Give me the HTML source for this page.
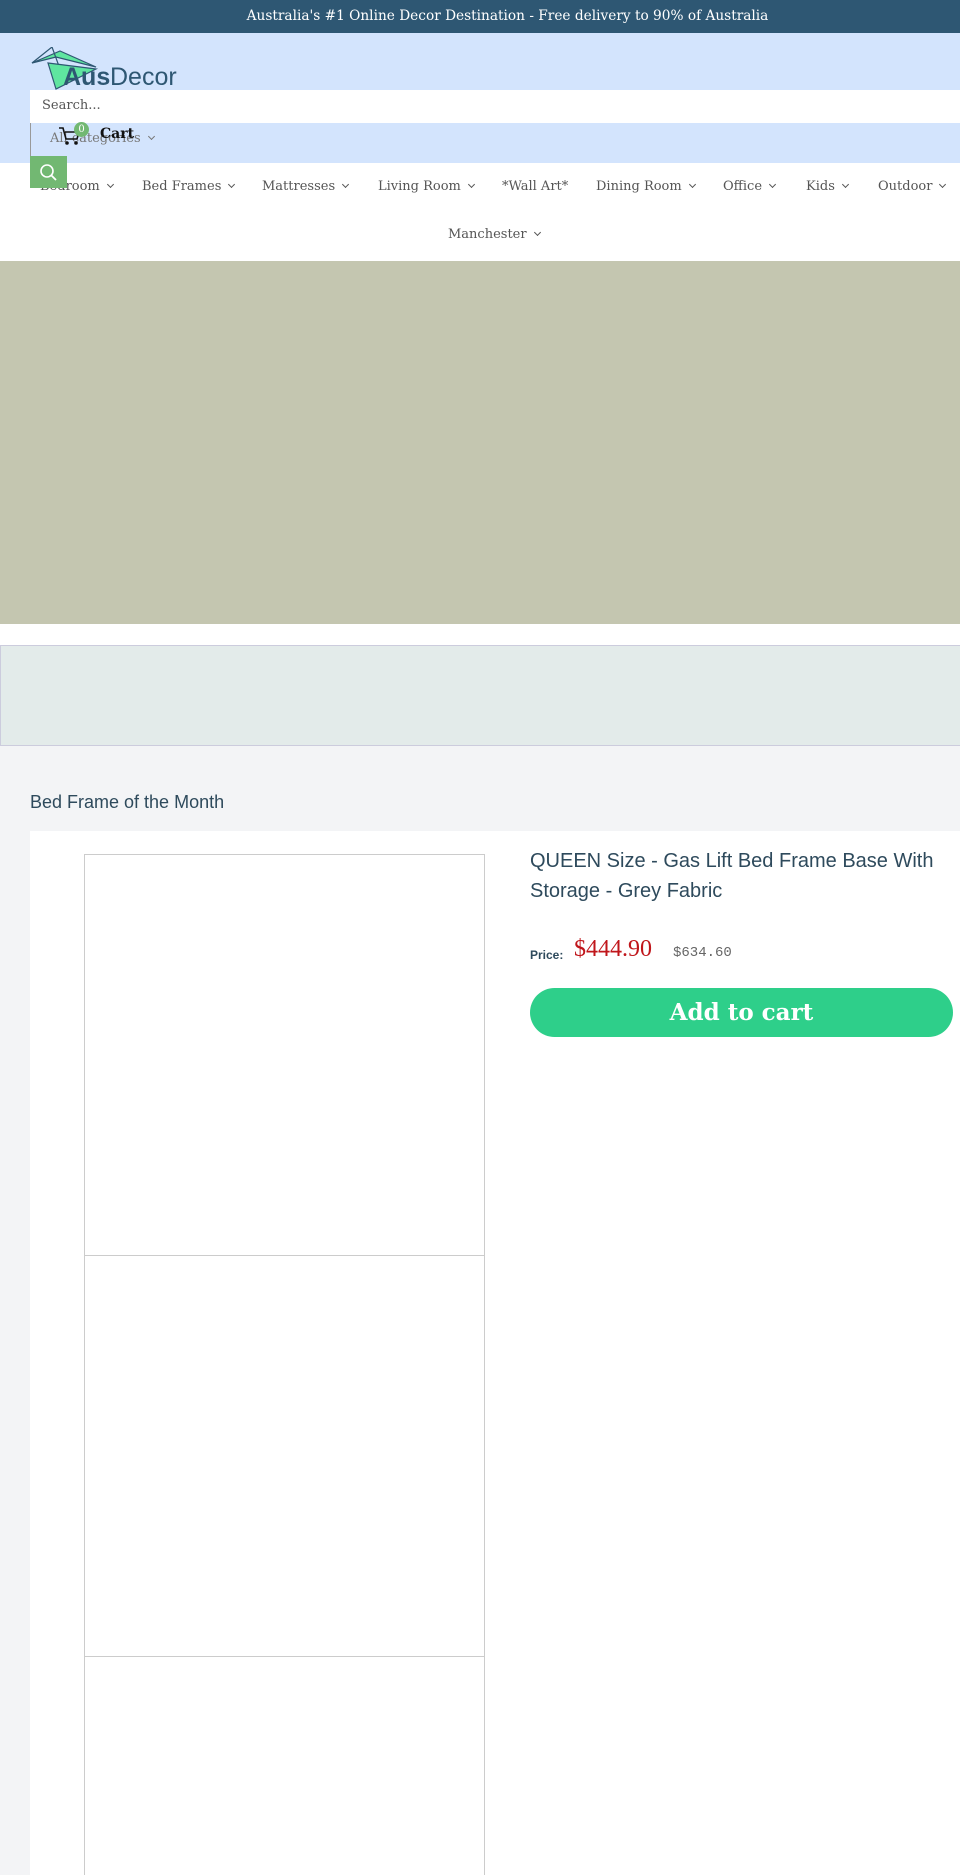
<!DOCTYPE html>
<html><head><meta charset="utf-8"><style>
*{margin:0;padding:0;box-sizing:border-box}
html,body{width:960px;height:1875px;overflow:hidden}
body{background:#f3f4f6;font-family:"DejaVu Serif","Liberation Serif",serif;position:relative}
.a{position:absolute}
.top{left:0;top:0;width:960px;height:33px;background:#2e5773;color:#fff;font-size:13.7px;text-align:center;line-height:33px;padding-left:55px}
.hdr{left:0;top:33px;width:960px;height:130px;background:#d3e4fd}
.nav{left:0;top:163px;width:960px;height:98px;background:#fff}
.ni{font-size:13px;color:#555;top:179px}
.ch{display:inline-block;width:5px;height:5px;border-right:1.5px solid #555;border-bottom:1.5px solid #555;transform:rotate(45deg);margin-left:8px;position:relative;top:-3px}
</style></head><body>
<div class="a top">Australia's #1 Online Decor Destination - Free delivery to 90% of Australia</div>
<div class="a hdr"></div>
<svg class="a" style="left:30px;top:47px" width="152" height="44" viewBox="0 0 152 44">
<polygon points="2,16 30,4 66,20 26,10" fill="#5fe5a0" stroke="#2e5773" stroke-width="1.2"/>
<polyline points="2,16 22,0 30,22" fill="none" stroke="#2e5773" stroke-width="1.2"/>
<polygon points="18,16 66,22 26,42" fill="#5fe5a0" stroke="#2e5773" stroke-width="1.2"/>
<text x="33" y="38" font-family="Liberation Sans,sans-serif" font-size="25" font-weight="bold" fill="#2e5773">Aus</text>
<text x="80" y="38" font-family="Liberation Sans,sans-serif" font-size="25" fill="#2e5773">Decor</text>
</svg>
<div class="a" style="left:30px;top:90px;width:930px;height:33px;background:#fff;font-size:13px;color:#555;padding:8px 12px">Search...</div>
<div class="a" style="left:30px;top:123px;width:1px;height:35px;background:#999"></div>
<div class="a" style="left:50px;top:131px;font-size:13px;color:#777">All categories<span class="ch" style="border-color:#777"></span></div>
<svg class="a" style="left:58px;top:126px" width="22" height="20" viewBox="0 0 22 20"><path d="M1 2h4l3 11h11l2-7H7" fill="none" stroke="#111" stroke-width="1.6"/><circle cx="9" cy="17" r="1.8" fill="#111"/><circle cx="18" cy="17" r="1.8" fill="#111"/></svg>
<div class="a" style="left:74px;top:122px;width:15px;height:15px;border-radius:50%;background:#72b872;color:#fff;font-size:10px;text-align:center;line-height:15px">0</div>
<div class="a" style="left:100px;top:126px;font-size:14px;font-weight:bold;color:#111">Cart</div>
<div class="nav a"></div>
<div class="a ni" style="left:40px">Bedroom<span class="ch"></span></div>
<div class="a ni" style="left:142px">Bed Frames<span class="ch"></span></div>
<div class="a ni" style="left:262px">Mattresses<span class="ch"></span></div>
<div class="a ni" style="left:378px">Living Room<span class="ch"></span></div>
<div class="a ni" style="left:502px">*Wall Art*</div>
<div class="a ni" style="left:596px">Dining Room<span class="ch"></span></div>
<div class="a ni" style="left:723px">Office<span class="ch"></span></div>
<div class="a ni" style="left:806px">Kids<span class="ch"></span></div>
<div class="a ni" style="left:878px">Outdoor<span class="ch"></span></div>
<div class="a ni" style="left:448px;top:227px">Manchester<span class="ch"></span></div>
<div class="a" style="left:30px;top:156px;width:37px;height:32px;background:#72b872"></div>
<svg class="a" style="left:39px;top:163px" width="20" height="20" viewBox="0 0 20 20"><circle cx="8" cy="8" r="6" fill="none" stroke="#fff" stroke-width="1.6"/><path d="M12.5 12.5L17 17" stroke="#fff" stroke-width="1.8"/></svg>
<div class="a" style="left:0;top:261px;width:960px;height:363px;background:#c4c6b0"></div>
<div class="a" style="left:0;top:624px;width:960px;height:21px;background:#fff"></div>
<div class="a" style="left:0;top:645px;width:961px;height:101px;background:#e3ebea;border:1px solid #ccd"></div>
<div class="a" style="left:30px;top:792px;font-family:'Liberation Sans',sans-serif;font-size:18px;color:#2e4a5c">Bed Frame of the Month</div>
<div class="a" style="left:30px;top:831px;width:930px;height:1044px;background:#fff"></div>
<div class="a" style="left:84px;top:854px;width:401px;height:1030px;border:1px solid #ccc"></div>
<div class="a" style="left:84px;top:1255px;width:401px;height:1px;background:#ccc"></div>
<div class="a" style="left:84px;top:1656px;width:401px;height:1px;background:#ccc"></div>
<div class="a" style="left:530px;top:846px;width:430px;font-family:'Liberation Sans',sans-serif;font-size:20px;line-height:30px;color:#2e4a5c">QUEEN Size - Gas Lift Bed Frame Base With Storage - Grey Fabric</div>
<div class="a" style="left:530px;top:948px;font-family:'Liberation Sans',sans-serif;font-size:12px;font-weight:bold;color:#2e4a5c">Price:</div>
<div class="a" style="left:574px;top:936px;font-family:'Liberation Serif',serif;font-size:24px;color:#c0161b">$444.90</div>
<div class="a" style="left:673px;top:945px;font-family:'Liberation Mono',monospace;font-size:14px;color:#666">$634.60</div>
<div class="a" style="left:530px;top:988px;width:423px;height:49px;border-radius:25px;background:#2ecf8a;color:#fff;font-size:23px;font-weight:bold;text-align:center;line-height:49px">Add to cart</div>
</body></html>
